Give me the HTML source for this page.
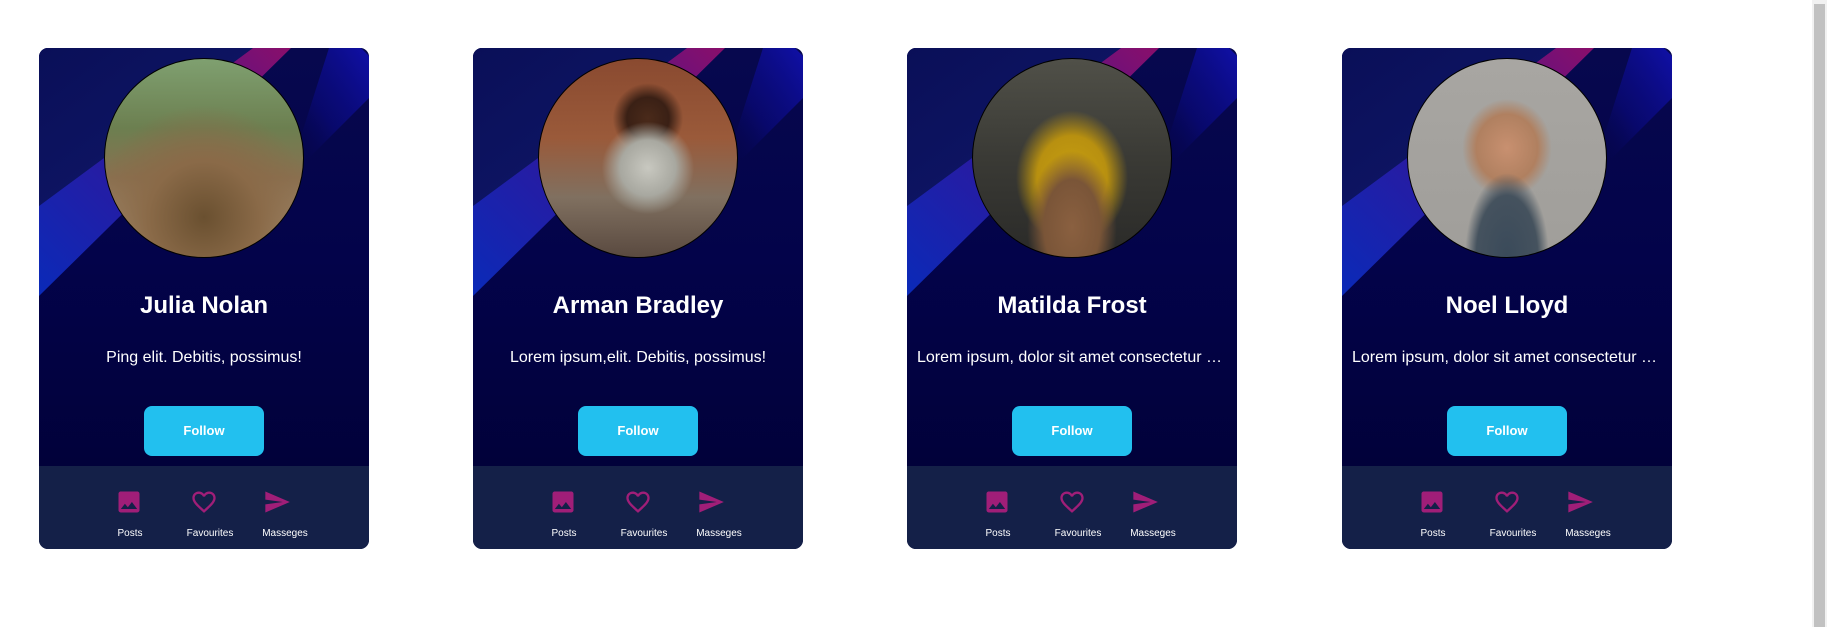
<!DOCTYPE html>
<html><head><meta charset="utf-8"><style>
*{box-sizing:border-box;margin:0;padding:0}
html,body{width:1827px;height:627px;overflow:hidden;background:#fff;font-family:"Liberation Sans",Arial,sans-serif}
.card{position:absolute;top:48px;width:330px;height:501px;border-radius:9px;overflow:hidden;background:#02023e}
.bg{position:absolute;left:0;top:0;width:330px;height:418px}
.av{position:absolute;left:65px;top:10px;width:200px;height:200px;border-radius:50%;border:1px solid #000;overflow:hidden}
.name{position:absolute;top:244px;width:100%;text-align:center;color:#fff;font-weight:bold;font-size:24px;line-height:28px}
.desc{position:absolute;top:300px;left:10px;right:10px;text-align:center;color:#fff;font-size:16px;line-height:20px;white-space:nowrap;overflow:hidden;text-overflow:ellipsis}
.btn{position:absolute;left:105px;top:358px;width:120px;height:50px;border-radius:8px;background:#22c0ef;color:#fff;font-weight:bold;font-size:13px;text-align:center;line-height:50px}
.foot{position:absolute;left:0;bottom:0;width:100%;height:83px;background:#142048}
.ic{position:absolute;top:22px;width:28px;height:28px;fill:#a01e78}
.lb{position:absolute;top:62px;width:80px;margin-left:-40px;text-align:center;color:#fff;font-size:10px;line-height:12px}
.sb{position:absolute;left:1812px;top:0;width:15px;height:627px;background:#f1f1f1}
.sb div{position:absolute;left:2px;top:4px;width:11px;height:623px;background:#c1c1c1}
</style></head><body>

<svg width="0" height="0" style="position:absolute">
<defs>
<linearGradient id="bgd" x1="0" y1="0" x2="0" y2="1"><stop offset="0" stop-color="#07084e"/><stop offset="0.5" stop-color="#03034a"/><stop offset="1" stop-color="#01013a"/></linearGradient>
<linearGradient id="lt" x1="0" y1="0" x2="1" y2="1"><stop offset="0" stop-color="#0a0f58"/><stop offset="1" stop-color="#10186a"/></linearGradient>
<linearGradient id="band" x1="0" y1="1" x2="1" y2="0"><stop offset="0" stop-color="#0a2ab8"/><stop offset="0.45" stop-color="#2a1aa0"/><stop offset="1" stop-color="#8a0e6a"/></linearGradient>
<linearGradient id="band2" x1="1" y1="0" x2="0" y2="1"><stop offset="0" stop-color="#1010a8"/><stop offset="0.6" stop-color="#0a0a80" stop-opacity="0.6"/><stop offset="1" stop-color="#05054a" stop-opacity="0"/></linearGradient>
</defs></svg>

<div class="card" style="left:39px">
<svg class="bg" viewBox="0 0 330 418"><rect width="330" height="418" fill="url(#bgd)"/><polygon points="0,0 214,0 0,158" fill="url(#lt)"/><polygon points="214,0 252,0 0,248 0,158" fill="url(#band)"/><polygon points="290,0 322,0 330,8 330,50 270,110 255,110" fill="url(#band2)"/></svg>
<div class="av" style="background:radial-gradient(circle at 50% 80%,#6a5030 0%,#8a6a48 30%,transparent 60%),linear-gradient(180deg,#7fa070 0%,#6c7f50 35%,#8a7050 60%,#b09a80 100%)"></div>
<div class="name">Julia Nolan</div><div class="desc">Ping elit. Debitis, possimus!</div><div class="btn">Follow</div>
<div class="foot">
<svg class="ic" style="left:76px" viewBox="0 0 24 24"><path d="M21 19V5c0-1.1-.9-2-2-2H5c-1.1 0-2 .9-2 2v14c0 1.1.9 2 2 2h14c1.1 0 2-.9 2-2zM8.5 13.5l2.5 3 3.5-4.5 4.5 6H5l3.5-4.5z"/></svg>
<svg class="ic" style="left:151px" viewBox="0 0 24 24"><path d="M16.5 3c-1.74 0-3.41.81-4.5 2.09C10.91 3.81 9.24 3 7.5 3 4.42 3 2 5.42 2 8.5c0 3.78 3.4 6.86 8.55 11.54L12 21.35l1.45-1.32C18.6 15.36 22 12.28 22 8.5 22 5.42 19.58 3 16.5 3zm-4.4 15.55l-.1.1-.1-.1C7.14 14.24 4 11.39 4 8.5 4 6.5 5.5 5 7.5 5c1.54 0 3.04.99 3.57 2.36h1.87C13.46 5.990 14.96 5 16.5 5c2 0 3.5 1.5 3.5 3.5 0 2.89-3.14 5.74-7.9 10.05z"/></svg>
<svg class="ic" style="left:224px" viewBox="0 0 24 24"><path d="M2.01 21L23 12 2.01 3 2 10l15 2-15 2z"/></svg>
<div class="lb" style="left:91px">Posts</div><div class="lb" style="left:171px">Favourites</div><div class="lb" style="left:246px">Masseges</div>
</div></div>

<div class="card" style="left:473px">
<svg class="bg" viewBox="0 0 330 418"><rect width="330" height="418" fill="url(#bgd)"/><polygon points="0,0 214,0 0,158" fill="url(#lt)"/><polygon points="214,0 252,0 0,248 0,158" fill="url(#band)"/><polygon points="290,0 322,0 330,8 330,50 270,110 255,110" fill="url(#band2)"/></svg>
<div class="av" style="background:radial-gradient(ellipse at 55% 55%,#c8c8c0 0%,#a8a8a0 18%,transparent 30%),radial-gradient(circle at 55% 30%,#4a2a1a 0%,#3a2015 12%,transparent 20%),linear-gradient(180deg,#8a4a30 0%,#9a5a3a 40%,#807060 70%,#5a4a40 100%)"></div>
<div class="name">Arman Bradley</div><div class="desc">Lorem ipsum,elit. Debitis, possimus!</div><div class="btn">Follow</div>
<div class="foot">
<svg class="ic" style="left:76px" viewBox="0 0 24 24"><path d="M21 19V5c0-1.1-.9-2-2-2H5c-1.1 0-2 .9-2 2v14c0 1.1.9 2 2 2h14c1.1 0 2-.9 2-2zM8.5 13.5l2.5 3 3.5-4.5 4.5 6H5l3.5-4.5z"/></svg>
<svg class="ic" style="left:151px" viewBox="0 0 24 24"><path d="M16.5 3c-1.74 0-3.41.81-4.5 2.09C10.91 3.81 9.24 3 7.5 3 4.42 3 2 5.42 2 8.5c0 3.78 3.4 6.86 8.55 11.54L12 21.35l1.45-1.32C18.6 15.36 22 12.28 22 8.5 22 5.42 19.58 3 16.5 3zm-4.4 15.55l-.1.1-.1-.1C7.14 14.24 4 11.39 4 8.5 4 6.5 5.5 5 7.5 5c1.54 0 3.04.99 3.57 2.36h1.87C13.46 5.99 14.96 5 16.5 5c2 0 3.5 1.5 3.5 3.5 0 2.89-3.14 5.74-7.9 10.05z"/></svg>
<svg class="ic" style="left:224px" viewBox="0 0 24 24"><path d="M2.01 21L23 12 2.01 3 2 10l15 2-15 2z"/></svg>
<div class="lb" style="left:91px">Posts</div><div class="lb" style="left:171px">Favourites</div><div class="lb" style="left:246px">Masseges</div>
</div></div>

<div class="card" style="left:907px">
<svg class="bg" viewBox="0 0 330 418"><rect width="330" height="418" fill="url(#bgd)"/><polygon points="0,0 214,0 0,158" fill="url(#lt)"/><polygon points="214,0 252,0 0,248 0,158" fill="url(#band)"/><polygon points="290,0 322,0 330,8 330,50 270,110 255,110" fill="url(#band2)"/></svg>
<div class="av" style="background:radial-gradient(ellipse at 50% 85%,#8a6040 0%,#7a5538 20%,transparent 32%),radial-gradient(ellipse at 50% 60%,#c8a010 0%,#b89010 25%,transparent 40%),linear-gradient(180deg,#505048 0%,#3a3a35 50%,#2a2a28 100%)"></div>
<div class="name">Matilda Frost</div><div class="desc">Lorem ipsum, dolor sit amet consectetur adipisicing elit.</div><div class="btn">Follow</div>
<div class="foot">
<svg class="ic" style="left:76px" viewBox="0 0 24 24"><path d="M21 19V5c0-1.1-.9-2-2-2H5c-1.1 0-2 .9-2 2v14c0 1.1.9 2 2 2h14c1.1 0 2-.9 2-2zM8.5 13.5l2.5 3 3.5-4.5 4.5 6H5l3.5-4.5z"/></svg>
<svg class="ic" style="left:151px" viewBox="0 0 24 24"><path d="M16.5 3c-1.74 0-3.41.81-4.5 2.09C10.91 3.81 9.24 3 7.5 3 4.42 3 2 5.42 2 8.5c0 3.78 3.4 6.86 8.55 11.54L12 21.35l1.45-1.32C18.6 15.36 22 12.28 22 8.5 22 5.42 19.58 3 16.5 3zm-4.4 15.55l-.1.1-.1-.1C7.14 14.24 4 11.39 4 8.5 4 6.5 5.5 5 7.5 5c1.54 0 3.04.99 3.57 2.36h1.87C13.46 5.99 14.96 5 16.5 5c2 0 3.5 1.5 3.5 3.5 0 2.89-3.14 5.74-7.9 10.05z"/></svg>
<svg class="ic" style="left:224px" viewBox="0 0 24 24"><path d="M2.01 21L23 12 2.01 3 2 10l15 2-15 2z"/></svg>
<div class="lb" style="left:91px">Posts</div><div class="lb" style="left:171px">Favourites</div><div class="lb" style="left:246px">Masseges</div>
</div></div>

<div class="card" style="left:1342px">
<svg class="bg" viewBox="0 0 330 418"><rect width="330" height="418" fill="url(#bgd)"/><polygon points="0,0 214,0 0,158" fill="url(#lt)"/><polygon points="214,0 252,0 0,248 0,158" fill="url(#band)"/><polygon points="290,0 322,0 330,8 330,50 270,110 255,110" fill="url(#band2)"/></svg>
<div class="av" style="background:radial-gradient(ellipse at 50% 100%,#3a4a5a 0%,#45525e 22%,transparent 30%),radial-gradient(ellipse at 50% 45%,#c89070 0%,#b08060 22%,transparent 32%),linear-gradient(180deg,#a8a6a2 0%,#a09e9a 100%)"></div>
<div class="name">Noel Lloyd</div><div class="desc">Lorem ipsum, dolor sit amet consectetur adipisicing elit.</div><div class="btn">Follow</div>
<div class="foot">
<svg class="ic" style="left:76px" viewBox="0 0 24 24"><path d="M21 19V5c0-1.1-.9-2-2-2H5c-1.1 0-2 .9-2 2v14c0 1.1.9 2 2 2h14c1.1 0 2-.9 2-2zM8.5 13.5l2.5 3 3.5-4.5 4.5 6H5l3.5-4.5z"/></svg>
<svg class="ic" style="left:151px" viewBox="0 0 24 24"><path d="M16.5 3c-1.74 0-3.41.81-4.5 2.09C10.91 3.81 9.24 3 7.5 3 4.42 3 2 5.42 2 8.5c0 3.78 3.4 6.86 8.55 11.54L12 21.35l1.45-1.32C18.6 15.36 22 12.28 22 8.5 22 5.42 19.58 3 16.5 3zm-4.4 15.55l-.1.1-.1-.1C7.14 14.24 4 11.39 4 8.5 4 6.5 5.5 5 7.5 5c1.54 0 3.04.99 3.57 2.36h1.87C13.46 5.99 14.96 5 16.5 5c2 0 3.5 1.5 3.5 3.5 0 2.89-3.14 5.74-7.9 10.05z"/></svg>
<svg class="ic" style="left:224px" viewBox="0 0 24 24"><path d="M2.01 21L23 12 2.01 3 2 10l15 2-15 2z"/></svg>
<div class="lb" style="left:91px">Posts</div><div class="lb" style="left:171px">Favourites</div><div class="lb" style="left:246px">Masseges</div>
</div></div>

<div class="sb"><div></div></div>
</body></html>
